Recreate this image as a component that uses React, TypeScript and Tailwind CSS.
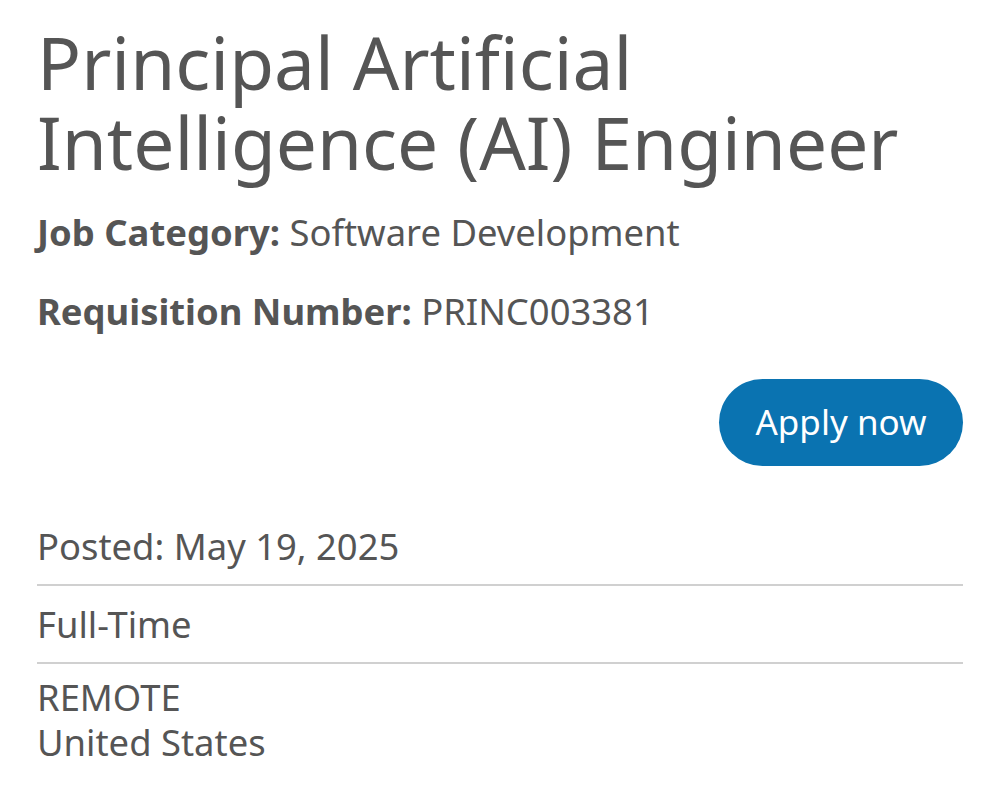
import React from "react";

const font = { fontFamily: '"Noto Sans", "Open Sans", sans-serif' };

function Field({ label, value }: { label: string; value: string }) {
  return (
    <p className="text-[36.4px] leading-[46px]">
      <span className="font-bold">{label}</span> {value}
    </p>
  );
}

export default function App() {
  return (
    <div
      className="min-h-[801px] bg-white px-[37px] pt-[22px] text-[#555555]"
      style={font}
    >
      <h1 className="text-[73px] font-normal leading-[80px]">
        Principal Artificial Intelligence (AI) Engineer
      </h1>
      <div className="mt-[27px] flex flex-col gap-[33px]">
        <Field label="Job Category:" value="Software Development" />
        <Field label="Requisition Number:" value="PRINC003381" />
      </div>
      <div className="mt-[45px] flex justify-end">
        <button
          type="button"
          className="h-[87px] w-[244px] rounded-full bg-[#0a73b1] text-[35px] text-white"
        >
          Apply now
        </button>
      </div>
      <div className="mt-[57px] text-[36.4px] leading-[46px]">
        <div className="border-b-2 border-[#d0d0d0] pb-[15px]">
          Posted: May 19, 2025
        </div>
        <div className="border-b-2 border-[#d0d0d0] py-[15px]">Full-Time</div>
        <div className="pt-[11px] leading-[45px]">
          REMOTE
          <br />
          United States
        </div>
      </div>
    </div>
  );
}
